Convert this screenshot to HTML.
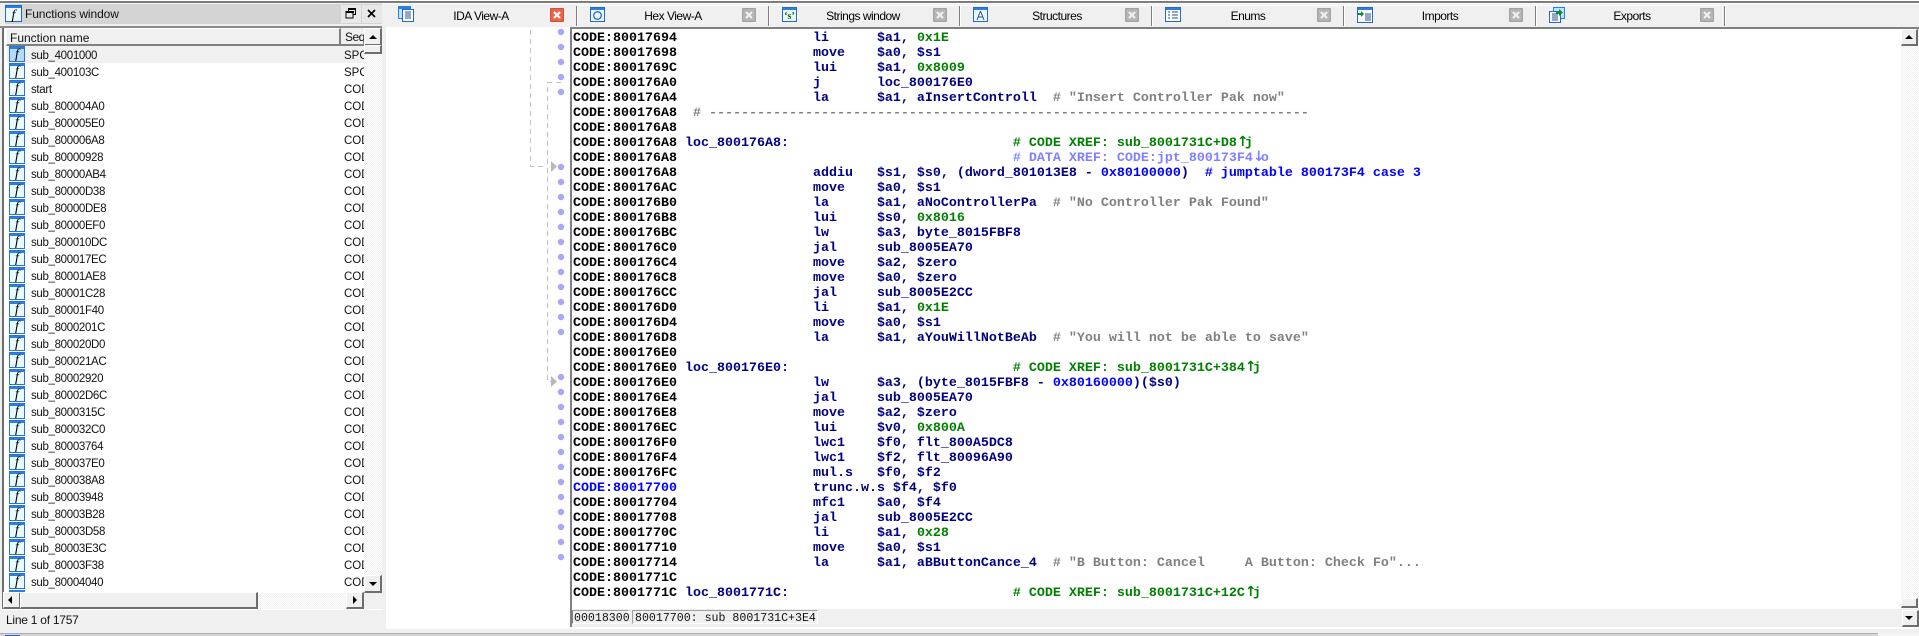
<!DOCTYPE html>
<html><head><meta charset="utf-8"><title>IDA</title>
<style>
html,body{margin:0;padding:0;width:1919px;height:636px;overflow:hidden;background:#f0f0f0}
div,svg,pre{position:absolute;box-sizing:border-box}
body{font-family:"Liberation Sans",sans-serif;font-size:12px;color:#000}
.tab{top:6px;height:20px;line-height:20px;text-align:center;font-size:12px;letter-spacing:-.5px;color:#000;width:100px}
.sep{top:6px;width:2px;height:20px;background:#808080;border-right:1px solid #fff}
.x{top:8px;width:14px;height:14px;background:#b4b4b4;border:1px solid #a0a0a0;border-radius:1px}
.x.on{background:#e8644c;border-color:#d05038}
.x svg{left:1px;top:1px}
.btn{background:#f0f0f0;border-top:1px solid #fff;border-left:1px solid #fff;border-right:2px solid #6e6e6e;border-bottom:2px solid #6e6e6e}
.track{background-color:#f0f0f0;background-image:repeating-conic-gradient(#fff 0 25%,#f0f0f0 0 50%);background-size:2px 2px}
.up{width:0;height:0;border-left:4px solid transparent;border-right:4px solid transparent;border-bottom:4px solid #000}
.dn{width:0;height:0;border-left:4px solid transparent;border-right:4px solid transparent;border-top:4px solid #000}
.lt{width:0;height:0;border-top:4px solid transparent;border-bottom:4px solid transparent;border-right:4px solid #000}
.rt{width:0;height:0;border-top:4px solid transparent;border-bottom:4px solid transparent;border-left:4px solid #000}
.ic{left:9px;width:16px;height:16px;background:linear-gradient(#2b7fe0 0,#2b7fe0 2px,#e9fbff 2px);border:1px solid #2b72d8;font:italic 14px/15px "Liberation Serif",serif;text-align:center;color:#000}
.nm{left:31px;height:17px;line-height:21px;font-size:11.5px;letter-spacing:-.33px;color:#101010;white-space:nowrap}
.sq{left:344px;width:20px;overflow:hidden;height:17px;line-height:21px;font-size:11.5px;color:#101010}
pre{margin:0;font:bold 13.333px/15px "Liberation Mono",monospace;color:#000080;letter-spacing:0;white-space:pre}
.k{color:#000}.g{color:#008000}.c{color:#808080}.d{color:#8080ff}.b{color:#0000ff}
.ar{display:inline-block;width:8px;font:bold 14px/10px "DejaVu Sans",sans-serif;text-align:center;overflow:visible;vertical-align:baseline}
</style></head><body>

<div style="left:0;top:0;width:1919px;height:4px;background:#fff"></div>
<div style="left:0;top:1px;width:1919px;height:2px;background:#7d7d7d"></div>

<!-- left panel -->
<div style="left:0;top:3px;width:383px;height:630px;background:#f0f0f0"></div>
<div style="left:5px;top:4px;width:377px;height:20px;background:#d4d4d4"></div>
<div style="left:341px;top:5px;width:20px;height:18px;background:#e8e8e8"></div>
<div style="left:362px;top:5px;width:20px;height:18px;background:#e8e8e8"></div>
<svg style="left:5px;top:5px" width="18" height="18" viewBox="0 0 18 18"><rect x=".5" y=".5" width="16" height="16" fill="#eaf9ff" stroke="#2468c8"/><rect x="1" y="1" width="15" height="2" fill="#2b7fe0"/><text x="8.500" y="14" font-family="Liberation Serif" font-style="italic" font-size="14" text-anchor="middle" fill="#000">f</text></svg>
<div style="left:25px;top:4px;height:20px;line-height:20px;font-size:12px;letter-spacing:-.1px;color:#111">Functions window</div>
<svg style="left:345px;top:7px" width="12" height="12" viewBox="0 0 12 12"><rect x="3.500" y="1.500" width="7" height="6" fill="none" stroke="#000"/><rect x="3" y="1" width="8" height="2" fill="#000"/><rect x="1" y="4.500" width="7" height="6.500" fill="#e8e8e8" stroke="#000"/><rect x="1" y="4" width="8" height="2" fill="#000"/></svg>
<svg style="left:366px;top:8px" width="11" height="11" viewBox="0 0 11 11"><path d="M2 2l7 7M9 2l-7 7" stroke="#000" stroke-width="1.600"/></svg>
<div style="left:0;top:26px;width:382px;height:2px;background:#8a8a8a"></div>

<div style="left:2px;top:28px;width:380px;height:581px;background:#fff"></div>
<div style="left:2px;top:28px;width:2px;height:582px;background:#6e6e6e"></div>
<div style="left:6px;top:28px;width:335px;height:18px;background:#f0f0f0;border-top:1px solid #fff;border-left:1px solid #fff;border-right:2px solid #808080;border-bottom:2px solid #808080;line-height:18px;padding-left:3px;font-size:12px;color:#111">Function name</div>
<div style="left:341px;top:28px;width:23px;height:18px;background:#f0f0f0;border-bottom:2px solid #808080;line-height:18px;padding-left:4px;font-size:12px;letter-spacing:-.5px;overflow:hidden;color:#111">Seq</div>
<div style="left:7px;top:46px;width:357px;height:17px;background:#f0f0f0"></div>

<div class="ic" style="top:46px;background:linear-gradient(#2b7fe0 0,#2b7fe0 2px,#b4dcf8 2px)">f</div><div class="nm" style="top:46px">sub_4001000</div><div class="sq" style="top:46px">SPC</div>
<div class="ic" style="top:63px">f</div><div class="nm" style="top:63px">sub_400103C</div><div class="sq" style="top:63px">SPC</div>
<div class="ic" style="top:80px">f</div><div class="nm" style="top:80px">start</div><div class="sq" style="top:80px">COD</div>
<div class="ic" style="top:97px">f</div><div class="nm" style="top:97px">sub_800004A0</div><div class="sq" style="top:97px">COD</div>
<div class="ic" style="top:114px">f</div><div class="nm" style="top:114px">sub_800005E0</div><div class="sq" style="top:114px">COD</div>
<div class="ic" style="top:131px">f</div><div class="nm" style="top:131px">sub_800006A8</div><div class="sq" style="top:131px">COD</div>
<div class="ic" style="top:148px">f</div><div class="nm" style="top:148px">sub_80000928</div><div class="sq" style="top:148px">COD</div>
<div class="ic" style="top:165px">f</div><div class="nm" style="top:165px">sub_80000AB4</div><div class="sq" style="top:165px">COD</div>
<div class="ic" style="top:182px">f</div><div class="nm" style="top:182px">sub_80000D38</div><div class="sq" style="top:182px">COD</div>
<div class="ic" style="top:199px">f</div><div class="nm" style="top:199px">sub_80000DE8</div><div class="sq" style="top:199px">COD</div>
<div class="ic" style="top:216px">f</div><div class="nm" style="top:216px">sub_80000EF0</div><div class="sq" style="top:216px">COD</div>
<div class="ic" style="top:233px">f</div><div class="nm" style="top:233px">sub_800010DC</div><div class="sq" style="top:233px">COD</div>
<div class="ic" style="top:250px">f</div><div class="nm" style="top:250px">sub_800017EC</div><div class="sq" style="top:250px">COD</div>
<div class="ic" style="top:267px">f</div><div class="nm" style="top:267px">sub_80001AE8</div><div class="sq" style="top:267px">COD</div>
<div class="ic" style="top:284px">f</div><div class="nm" style="top:284px">sub_80001C28</div><div class="sq" style="top:284px">COD</div>
<div class="ic" style="top:301px">f</div><div class="nm" style="top:301px">sub_80001F40</div><div class="sq" style="top:301px">COD</div>
<div class="ic" style="top:318px">f</div><div class="nm" style="top:318px">sub_8000201C</div><div class="sq" style="top:318px">COD</div>
<div class="ic" style="top:335px">f</div><div class="nm" style="top:335px">sub_800020D0</div><div class="sq" style="top:335px">COD</div>
<div class="ic" style="top:352px">f</div><div class="nm" style="top:352px">sub_800021AC</div><div class="sq" style="top:352px">COD</div>
<div class="ic" style="top:369px">f</div><div class="nm" style="top:369px">sub_80002920</div><div class="sq" style="top:369px">COD</div>
<div class="ic" style="top:386px">f</div><div class="nm" style="top:386px">sub_80002D6C</div><div class="sq" style="top:386px">COD</div>
<div class="ic" style="top:403px">f</div><div class="nm" style="top:403px">sub_8000315C</div><div class="sq" style="top:403px">COD</div>
<div class="ic" style="top:420px">f</div><div class="nm" style="top:420px">sub_800032C0</div><div class="sq" style="top:420px">COD</div>
<div class="ic" style="top:437px">f</div><div class="nm" style="top:437px">sub_80003764</div><div class="sq" style="top:437px">COD</div>
<div class="ic" style="top:454px">f</div><div class="nm" style="top:454px">sub_800037E0</div><div class="sq" style="top:454px">COD</div>
<div class="ic" style="top:471px">f</div><div class="nm" style="top:471px">sub_800038A8</div><div class="sq" style="top:471px">COD</div>
<div class="ic" style="top:488px">f</div><div class="nm" style="top:488px">sub_80003948</div><div class="sq" style="top:488px">COD</div>
<div class="ic" style="top:505px">f</div><div class="nm" style="top:505px">sub_80003B28</div><div class="sq" style="top:505px">COD</div>
<div class="ic" style="top:522px">f</div><div class="nm" style="top:522px">sub_80003D58</div><div class="sq" style="top:522px">COD</div>
<div class="ic" style="top:539px">f</div><div class="nm" style="top:539px">sub_80003E3C</div><div class="sq" style="top:539px">COD</div>
<div class="ic" style="top:556px">f</div><div class="nm" style="top:556px">sub_80003F38</div><div class="sq" style="top:556px">COD</div>
<div class="ic" style="top:573px">f</div><div class="nm" style="top:573px">sub_80004040</div><div class="sq" style="top:573px">COD</div>
<div style="left:9px;top:590px;width:16px;height:3px;background:#2b7fe0"></div>

<!-- vertical scrollbar -->
<div class="track" style="left:364px;top:45px;width:18px;height:531px"></div>
<div class="btn" style="left:364px;top:28px;width:18px;height:18px"></div>
<div class="up" style="left:369px;top:35px"></div>
<div class="btn" style="left:364px;top:45px;width:18px;height:9px"></div>
<div class="btn" style="left:364px;top:575px;width:18px;height:18px"></div>
<div class="dn" style="left:369px;top:582px"></div>
<!-- horizontal scrollbar -->
<div style="left:4px;top:593px;width:378px;height:16px;background:#f0f0f0"></div>
<div class="track" style="left:257px;top:593px;width:90px;height:16px"></div>
<div class="btn" style="left:3px;top:592px;width:18px;height:17px"></div>
<div class="lt" style="left:8px;top:596px"></div>
<div class="btn" style="left:20px;top:592px;width:238px;height:17px"></div>
<div class="btn" style="left:346px;top:592px;width:18px;height:17px"></div>
<div class="rt" style="left:353px;top:596px"></div>
<div style="left:2px;top:609px;width:381px;height:1px;background:#fff"></div>
<div style="left:6px;top:611px;height:18px;line-height:18px;font-size:12px;letter-spacing:-.25px;color:#111">Line 1 of 1757</div>

<!-- white center -->
<div style="left:386px;top:27px;width:1533px;height:602px;background:#fff"></div>

<!-- tab bar -->
<div style="left:386px;top:4px;width:1533px;height:23px;background:#f0f0f0"></div>
<div style="left:579px;top:5px;width:1148px;height:1px;background:#fff"></div>
<div style="left:571px;top:27px;width:1348px;height:2px;background:#808080"></div>

<div class="sep" style="left:576px"></div><div class="sep" style="left:768px"></div><div class="sep" style="left:959px"></div><div class="sep" style="left:1151px"></div><div class="sep" style="left:1343px"></div><div class="sep" style="left:1535px"></div><div class="sep" style="left:1724px"></div>

<div class="tab" style="left:431px">IDA View-A</div>
<div class="tab" style="left:623px">Hex View-A</div>
<div class="tab" style="left:813px">Strings window</div>
<div class="tab" style="left:1007px">Structures</div>
<div class="tab" style="left:1198px">Enums</div>
<div class="tab" style="left:1390px">Imports</div>
<div class="tab" style="left:1582px">Exports</div>

<div class="x on" style="left:550px"><svg width="10" height="10" viewBox="0 0 10 10"><path d="M2 2l6 6M8 2l-6 6" stroke="#fff" stroke-width="2.200"/></svg></div>
<div class="x" style="left:742px"><svg width="10" height="10" viewBox="0 0 10 10"><path d="M2 2l6 6M8 2l-6 6" stroke="#f0f0f0" stroke-width="2.200"/></svg></div>
<div class="x" style="left:933px"><svg width="10" height="10" viewBox="0 0 10 10"><path d="M2 2l6 6M8 2l-6 6" stroke="#f0f0f0" stroke-width="2.200"/></svg></div>
<div class="x" style="left:1125px"><svg width="10" height="10" viewBox="0 0 10 10"><path d="M2 2l6 6M8 2l-6 6" stroke="#f0f0f0" stroke-width="2.200"/></svg></div>
<div class="x" style="left:1317px"><svg width="10" height="10" viewBox="0 0 10 10"><path d="M2 2l6 6M8 2l-6 6" stroke="#f0f0f0" stroke-width="2.200"/></svg></div>
<div class="x" style="left:1509px"><svg width="10" height="10" viewBox="0 0 10 10"><path d="M2 2l6 6M8 2l-6 6" stroke="#f0f0f0" stroke-width="2.200"/></svg></div>
<div class="x" style="left:1700px"><svg width="10" height="10" viewBox="0 0 10 10"><path d="M2 2l6 6M8 2l-6 6" stroke="#f0f0f0" stroke-width="2.200"/></svg></div>

<!-- tab icons -->
<svg style="left:398px;top:6px" width="16" height="16" viewBox="0 0 16 16"><rect x=".5" y=".5" width="12" height="12" fill="#bfe4ff" stroke="#2b7fe0"/><rect x="1" y="1" width="11" height="2" fill="#2b7fe0"/><rect x="4.500" y="3.500" width="11" height="12" fill="#fff" stroke="#2468c8"/><path d="M7 6h6M7 8h6M7 10h6M7 12h6" stroke="#28508c"/></svg>
<svg style="left:590px;top:7px" width="15" height="15" viewBox="0 0 15 15"><rect x=".5" y=".5" width="14" height="14" fill="#eaf9ff" stroke="#2468c8"/><rect x="1" y="1" width="13" height="2" fill="#2b7fe0"/><circle cx="7.500" cy="8.500" r="3.800" fill="none" stroke="#2468c8" stroke-width="1.300"/></svg>
<svg style="left:782px;top:7px" width="15" height="15" viewBox="0 0 15 15"><rect x=".5" y=".5" width="14" height="14" fill="#eaf9ff" stroke="#2468c8"/><rect x="1" y="1" width="13" height="2" fill="#2b7fe0"/><text x="7.500" y="12" font-family="Liberation Serif" font-weight="bold" font-size="10" text-anchor="middle" fill="#086808">‘s’</text></svg>
<svg style="left:973px;top:7px" width="15" height="15" viewBox="0 0 15 15"><rect x=".5" y=".5" width="14" height="14" fill="#eaf9ff" stroke="#2468c8"/><rect x="1" y="1" width="13" height="2" fill="#2b7fe0"/><path d="M7.500 4L4 13M7.500 4l3.500 9M5.500 10h4" stroke="#28508c" fill="none"/></svg>
<svg style="left:1165px;top:7px" width="16" height="15" viewBox="0 0 16 15"><rect x=".5" y=".5" width="15" height="14" fill="#fff" stroke="#2468c8"/><rect x="1" y="1" width="14" height="2" fill="#2b7fe0"/><path d="M3 5h2M3 8h2M3 11h2M7 5h6M7 8h6M7 11h6" stroke="#28508c"/></svg>
<svg style="left:1357px;top:7px" width="16" height="16" viewBox="0 0 16 16"><rect x=".5" y=".5" width="15" height="15" fill="#fff" stroke="#2468c8"/><rect x="1" y="1" width="14" height="2" fill="#2b7fe0"/><path d="M8 7h6M8 9h6M8 11h6M8 13h6" stroke="#28508c"/><path d="M1 6h3V4l3 3-3 3V8H1z" fill="#0a9030"/></svg>
<svg style="left:1549px;top:7px" width="16" height="16" viewBox="0 0 16 16"><rect x="4.500" y=".5" width="11" height="11" fill="#bfe4ff" stroke="#2b7fe0"/><rect x=".5" y="4.500" width="11" height="11" fill="#fff" stroke="#2468c8"/><path d="M3 7h6M3 9h6M3 11h6M3 13h6" stroke="#28508c"/><path d="M7 5h3V2l4 3.500-4 3.500V7H7z" fill="#0a9030"/></svg>

<!-- margin arrows -->
<svg style="left:520px;top:27px" width="52" height="600" viewBox="520 27 52 600">
<path d="M530.500 30V166.500H547" fill="none" stroke="#c0c0c0" stroke-dasharray="5 4"/>
<path d="M561 82.500H547.500V381.500H551" fill="none" stroke="#c0c0c0" stroke-dasharray="5 4"/>
<path d="M551 161v11l6-5.500zM551 376v11l6-5.500z" fill="#b8b8b8"/>
<g stroke="#a8a8f8" stroke-width="6.500" stroke-linecap="round" stroke-dasharray="0 15" fill="none">
<path d="M561 32V93"/><path d="M561 167V333"/><path d="M561 377V558"/>
</g></svg>

<!-- code frame -->
<div style="left:570px;top:27px;width:2px;height:600px;background:#808080"></div>

<pre style="left:573px;top:31px"><span class="k">CODE:80017694</span>                 li      $a1, <span class="g">0x1E</span>
<span class="k">CODE:80017698</span>                 move    $a0, $s1
<span class="k">CODE:8001769C</span>                 lui     $a1, <span class="g">0x8009</span>
<span class="k">CODE:800176A0</span>                 j       loc_800176E0
<span class="k">CODE:800176A4</span>                 la      $a1, aInsertControll  <span class="c"># "Insert Controller Pak now"</span>
<span class="k">CODE:800176A8</span>  <span class="c"># ---------------------------------------------------------------------------</span>
<span class="k">CODE:800176A8</span>
<span class="k">CODE:800176A8</span> loc_800176A8:                            <span class="g"># CODE XREF: sub_8001731C+D8<span class="ar">↑</span>j</span>
<span class="k">CODE:800176A8</span>                                          <span class="d"># DATA XREF: CODE:jpt_800173F4<span class="ar">↓</span>o</span>
<span class="k">CODE:800176A8</span>                 addiu   $s1, $s0, (dword_801013E8 - <span class="b">0x80100000</span>)  <span class="b"># jumptable 800173F4 case 3</span>
<span class="k">CODE:800176AC</span>                 move    $a0, $s1
<span class="k">CODE:800176B0</span>                 la      $a1, aNoControllerPa  <span class="c"># "No Controller Pak Found"</span>
<span class="k">CODE:800176B8</span>                 lui     $s0, <span class="g">0x8016</span>
<span class="k">CODE:800176BC</span>                 lw      $a3, byte_8015FBF8
<span class="k">CODE:800176C0</span>                 jal     sub_8005EA70
<span class="k">CODE:800176C4</span>                 move    $a2, $zero
<span class="k">CODE:800176C8</span>                 move    $a0, $zero
<span class="k">CODE:800176CC</span>                 jal     sub_8005E2CC
<span class="k">CODE:800176D0</span>                 li      $a1, <span class="g">0x1E</span>
<span class="k">CODE:800176D4</span>                 move    $a0, $s1
<span class="k">CODE:800176D8</span>                 la      $a1, aYouWillNotBeAb  <span class="c"># "You will not be able to save"</span>
<span class="k">CODE:800176E0</span>
<span class="k">CODE:800176E0</span> loc_800176E0:                            <span class="g"># CODE XREF: sub_8001731C+384<span class="ar">↑</span>j</span>
<span class="k">CODE:800176E0</span>                 lw      $a3, (byte_8015FBF8 - <span class="b">0x80160000</span>)($s0)
<span class="k">CODE:800176E4</span>                 jal     sub_8005EA70
<span class="k">CODE:800176E8</span>                 move    $a2, $zero
<span class="k">CODE:800176EC</span>                 lui     $v0, <span class="g">0x800A</span>
<span class="k">CODE:800176F0</span>                 lwc1    $f0, flt_800A5DC8
<span class="k">CODE:800176F4</span>                 lwc1    $f2, flt_80096A90
<span class="k">CODE:800176FC</span>                 mul.s   $f0, $f2
<span class="b">CODE:80017700</span>                 trunc.w.s $f4, $f0
<span class="k">CODE:80017704</span>                 mfc1    $a0, $f4
<span class="k">CODE:80017708</span>                 jal     sub_8005E2CC
<span class="k">CODE:8001770C</span>                 li      $a1, <span class="g">0x28</span>
<span class="k">CODE:80017710</span>                 move    $a0, $s1
<span class="k">CODE:80017714</span>                 la      $a1, aBButtonCance_4  <span class="c"># "B Button: Cancel     A Button: Check Fo"...</span>
<span class="k">CODE:8001771C</span>
<span class="k">CODE:8001771C</span> loc_8001771C:                            <span class="g"># CODE XREF: sub_8001731C+12C<span class="ar">↑</span>j</span></pre>

<!-- code scrollbar -->
<div class="track" style="left:1901px;top:29px;width:18px;height:580px"></div>
<div class="btn" style="left:1901px;top:29px;width:17px;height:17px"></div>
<div class="up" style="left:1905px;top:35px"></div>
<div class="btn" style="left:1901px;top:598px;width:17px;height:10px"></div>

<!-- code status bar -->
<div style="left:572px;top:609px;width:1347px;height:18px;background:#f0f0f0"></div>
<div style="left:572px;top:610px;width:57px;height:14px;border:1px solid #fff;border-left:1px solid #808080;border-top:1px solid #a0a0a0;font:11.600px/15px 'Liberation Mono',monospace;padding-left:1px;color:#111">00018300</div>
<div style="left:632px;top:610px;width:186px;height:14px;border:1px solid #fff;border-left:1px solid #a0a0a0;border-top:1px solid #a0a0a0;font:11.600px/15px 'Liberation Mono',monospace;padding-left:2px;white-space:pre;color:#111">80017700: sub 8001731C+3E4</div>
<div class="btn" style="left:1902px;top:610px;width:17px;height:17px"></div>
<div class="dn" style="left:1905px;top:616px"></div>
<div style="left:386px;top:627px;width:1533px;height:2px;background:#fff"></div>

<!-- bottom strip -->
<div style="left:0;top:629px;width:1919px;height:4px;background:#f0f0f0"></div>
<div style="left:0;top:633px;width:1878px;height:3px;background:#d4d4d4"></div>
<div style="left:0;top:633px;width:1878px;height:1px;background:#b0b0b0"></div>
<div style="left:5px;top:635px;width:15px;height:1px;background:#2468c8"></div>
<div style="left:1878px;top:633px;width:41px;height:3px;background:#f4f4f4"></div>
</body></html>
